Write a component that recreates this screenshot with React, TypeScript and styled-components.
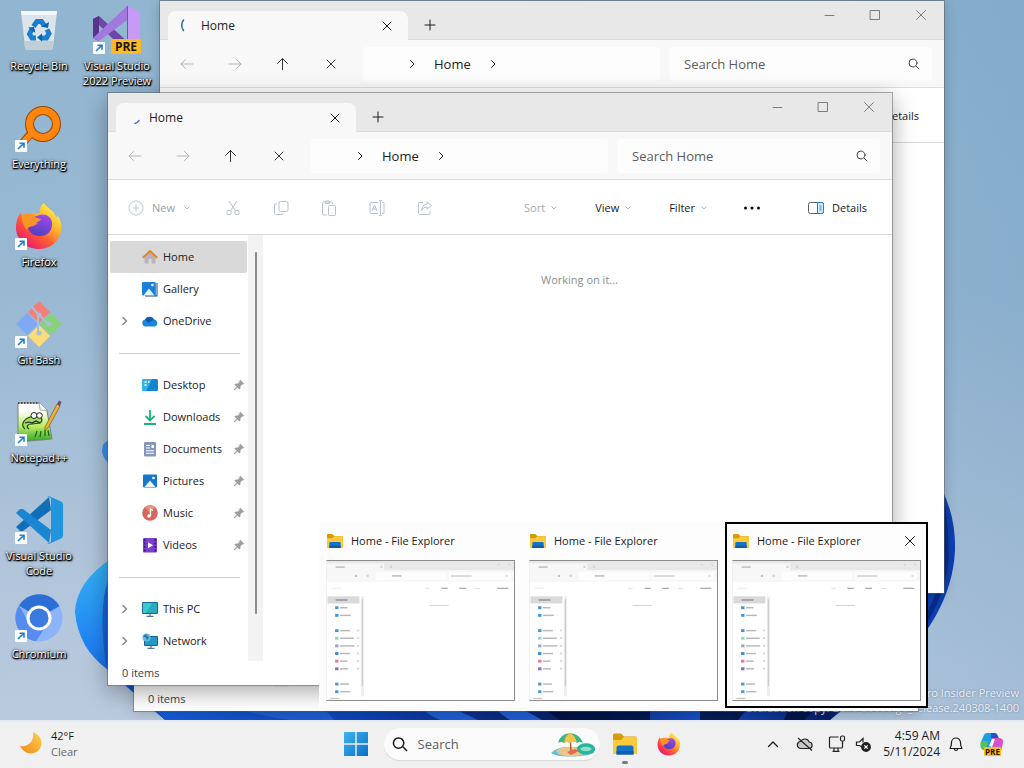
import React from "react";
import styled, { createGlobalStyle, css } from "styled-components";

const GlobalStyle = createGlobalStyle`
  *, *::before, *::after { box-sizing: border-box; }
  body {
    margin: 0;
    font-family: "Open Sans", "Noto Sans", sans-serif;
    font-size: 11px;
    line-height: 16px;
    color: #1b1b1b;
    overflow: hidden;
  }
  button {
    font: inherit;
    color: inherit;
    background: none;
    border: 0;
    padding: 0;
    margin: 0;
    display: flex;
    align-items: center;
    justify-content: center;
  }
  svg { display: block; flex: none; }
`;

/* ---------- shell ---------- */

const Screen = styled.div`
  height: 100vh;
  display: grid;
  grid-template-rows: minmax(0, 1fr) 48px;
`;

const Desktop = styled.main`
  position: relative;
  overflow: hidden;
  background: linear-gradient(180deg, #8ab1cd 0%, #92b4d0 40%, #a9c0d8 75%, #b6c7dc 100%);
`;

const WallpaperSvg = styled.svg`
  position: absolute;
  inset: 0;
  width: 100%;
  height: 100%;
`;

const IconGrid = styled.ul`
  position: relative;
  margin: 0;
  padding: 0;
  list-style: none;
  display: grid;
  grid-auto-flow: column;
  grid-template-rows: repeat(7, 98px);
  grid-auto-columns: 78px;
`;

const Shortcut = styled.button`
  width: 78px;
  padding-top: 6px;
  flex-direction: column;
  justify-content: flex-start;
  gap: 4px;
  color: #fff;
  line-height: 15px;
  text-align: center;
`;

const ShortcutLabel = styled.span`
  text-shadow: 0 1px 1px #000, 1px 1px 1px #000, 1px 1px 2px #000, 0 0 3px rgba(0, 0, 0, 0.9);
`;

const Watermark = styled.p`
  position: absolute;
  right: 5px;
  bottom: 5px;
  margin: 0;
  text-align: right;
  line-height: 15px;
  color: rgba(255, 255, 255, 0.85);
  text-shadow: 0 0 2px rgba(60, 80, 110, 0.6);
`;

/* ---------- explorer window ---------- */

const WindowFrame = styled.section<{ $x: number; $y: number; $active?: boolean }>`
  position: absolute;
  left: ${(p) => p.$x}px;
  top: ${(p) => p.$y}px;
  width: 784px;
  background: #fff;
  box-shadow: 0 0 0 1px rgba(90, 90, 90, 0.5),
    ${(p) => (p.$active ? "0 6px 22px rgba(0, 0, 0, 0.36)" : "0 2px 12px rgba(0, 0, 0, 0.2)")};
`;

const TitleBar = styled.header`
  display: flex;
  height: 39px;
  padding-left: 8px;
  background: #e8e8e8;
  border-bottom: 1px solid #dcdcdc;
`;

const Tab = styled.div`
  display: flex;
  align-items: center;
  width: 240px;
  height: 29px;
  margin-top: 10px;
  padding: 0 9px 0 13px;
  background: #f8f8f8;
  border-radius: 8px 8px 0 0;
  font-size: 12px;
`;

const TabTitle = styled.span`
  flex: 1;
  padding-left: 4px;
`;

const TabClose = styled.button`
  width: 24px;
  height: 24px;
`;

const NewTab = styled.button`
  width: 32px;
  height: 29px;
  margin: 9px 0 0 6px;
`;

const Caption = styled.div`
  display: flex;
  margin-left: auto;
  color: #7d7d7d;
`;

const CaptionButton = styled.button`
  width: 46px;
  height: 28px;
`;

const AddressRow = styled.div`
  display: flex;
  align-items: center;
  height: 48px;
  padding: 0 12px 0 3px;
  background: #f8f8f8;
  border-bottom: 1px solid #dedede;
`;

const NavButton = styled.button<{ $muted?: boolean }>`
  width: 48px;
  height: 34px;
  color: ${(p) => (p.$muted ? "#b4b4b4" : "#333")};
`;

const field = css`
  display: flex;
  align-items: center;
  height: 34px;
  background: #fdfdfd;
  border-radius: 4px;
  font-size: 13px;
`;

const Breadcrumb = styled.nav`
  ${field}
  flex: 1;
  margin: 0 9px 0 8px;
  padding-left: 39px;
  gap: 12px;
`;

const CrumbArrow = styled.button`
  width: 20px;
  height: 24px;
`;

const SearchField = styled.label`
  ${field}
  width: 263px;
  padding: 0 10px 0 15px;
  color: #444;
`;

const SearchInput = styled.input`
  flex: 1;
  min-width: 0;
  padding: 0;
  border: 0;
  outline: 0;
  background: none;
  font: inherit;
  color: inherit;
  &::placeholder {
    color: #5c5c5c;
    opacity: 1;
  }
`;

const CommandBar = styled.div`
  display: flex;
  align-items: center;
  justify-content: space-between;
  height: 55px;
  padding: 1px 21px 0 20px;
  border-bottom: 1px solid #d8d8d8;
`;

const EditTools = styled.div`
  display: flex;
`;

const ViewTools = styled.div`
  display: flex;
  gap: 29px;
`;

const NewButton = styled.button`
  width: 81px;
  height: 32px;
  justify-content: flex-start;
  gap: 8px;
  color: #9c9c9c;
`;

const ToolButton = styled.button`
  width: 48px;
  height: 32px;
`;

const MenuButton = styled.button<{ $muted?: boolean }>`
  height: 32px;
  padding: 0 4px;
  gap: 5px;
  color: ${(p) => (p.$muted ? "#aaa" : "#1b1b1b")};
`;

const MoreButton = styled.button`
  width: 22px;
  height: 32px;
`;

const DetailsButton = styled(MenuButton)`
  gap: 8px;
  margin-left: 12px;
`;

const Body = styled.div`
  display: flex;
`;

const SideNav = styled.ul`
  width: 140px;
  margin: 0;
  padding: 6px 0 4px 2px;
  list-style: none;
`;

const NavItem = styled.button<{ $selected?: boolean }>`
  width: 137px;
  height: 32px;
  padding: 0 2px 0 8px;
  justify-content: flex-start;
  background: ${(p) => (p.$selected ? "#d9d9d9" : "none")};
  border-radius: 2px;
`;

const ExpandSlot = styled.span`
  width: 24px;
  color: #8a8a8a;
`;

const NavLabel = styled.span`
  flex: 1;
  padding-left: 5px;
  text-align: left;
`;

const Divider = styled.li`
  height: 32px;
  padding: 16px 8px 0 9px;
  &::before {
    content: "";
    display: block;
    border-top: 1px solid #cfcfcf;
  }
`;

const ScrollTrack = styled.div`
  width: 15px;
  padding: 17px 6px 47px 7px;
  background: #f3f3f3;
`;

const ScrollThumb = styled.div`
  height: 100%;
  background: #8a8a8a;
  border-radius: 1px;
`;

const FileArea = styled.div`
  flex: 1;
  padding: 37px 0 0 4px;
  text-align: center;
  color: #8e8e8e;
`;

const StatusBar = styled.footer`
  height: 24px;
  padding: 4px 14px;
  color: #33414f;
`;

/* ---------- task previews ---------- */

const PreviewPanel = styled.div`
  position: absolute;
  left: calc(50% - 193px);
  bottom: 12px;
  display: flex;
  background: #fdfdfd;
`;

const PreviewCard = styled.article<{ $focused?: boolean }>`
  width: 203px;
  padding: 5px;
  border: 2px solid ${(p) => (p.$focused ? "#000" : "transparent")};
`;

const PreviewHead = styled.header`
  display: flex;
  align-items: center;
  height: 24px;
  margin-bottom: 7px;
  padding-left: 1px;
  gap: 8px;
`;

const PreviewTitle = styled.span`
  flex: 1;
`;

const PreviewClose = styled.button`
  width: 22px;
  height: 22px;
`;

const ThumbSvg = styled.svg`
  width: 100%;
  height: auto;
  border: 1px solid #8c8c8c;
  border-left-color: #f0f0f0;
`;

/* ---------- taskbar ---------- */

const Taskbar = styled.footer`
  display: grid;
  grid-template-columns: 1fr auto 1fr;
  align-items: center;
  background: #f0f0f0;
  box-shadow: inset 0 2px #e3e9f3;
`;

const Weather = styled.button`
  justify-self: start;
  padding-left: 19px;
  gap: 8px;
  text-align: left;
`;

const Muted = styled.span`
  display: block;
  color: #666;
`;

const Pinned = styled.div`
  display: flex;
  align-items: center;
`;

const TaskButton = styled.button`
  position: relative;
  width: 44px;
  height: 40px;
`;

const RunningMark = styled.span`
  position: absolute;
  left: 19px;
  bottom: 0;
  width: 6px;
  height: 3px;
  border-radius: 2px;
  background: #7a7a7a;
`;

const TaskSearch = styled.label`
  display: flex;
  align-items: center;
  width: 216px;
  height: 32px;
  margin: 0 3px 0 6px;
  padding: 0 4px 0 8px;
  gap: 10px;
  background: #fbfbfb;
  border-radius: 16px;
  box-shadow: 0 1px 1px #d8d8d8;
  font-size: 13px;
`;

const Tray = styled.div`
  display: flex;
  align-items: center;
  justify-self: end;
  padding-right: 12px;
`;

const TrayButton = styled.button<{ $w: number }>`
  width: ${(p) => p.$w}px;
  height: 40px;
`;

const Clock = styled.button`
  display: block;
  width: 68px;
  font-size: 12px;
  text-align: right;
`;

/* ---------- small glyphs ---------- */

type StrokeProps = { d: string; size?: number; width?: number; box?: number };
const Stroke = ({ d, size = 16, width = 1, box = 16 }: StrokeProps) => (
  <svg width={size} height={size} viewBox={`0 0 ${box} ${box}`} fill="none" stroke="currentColor" strokeWidth={width} strokeLinecap="round" strokeLinejoin="round" aria-hidden="true">
    <path d={d} />
  </svg>
);

const X_MARK = "M4 4l8 8M12 4l-8 8";
const CHEVRON_RIGHT = "M6.500 4.500L10 8l-3.500 3.500";
const SEARCH = "M10 10l3 3M11 7a4 4 0 1 1-8 0a4 4 0 0 1 8 0z";

const ChevronDown = () => (
  <svg width="8" height="8" viewBox="0 0 8 8" fill="none" stroke="#b9b9b9" aria-hidden="true"><path d="M1.500 2.500L4 5l2.500-2.500" /></svg>
);

const Tool = ({ children }: { children: React.ReactNode }) => (
  <svg width="16" height="16" viewBox="0 0 16 16" fill="none" stroke="#b4c3d6" strokeWidth="1" strokeLinejoin="round" aria-hidden="true">{children}</svg>
);

const Pin = () => (
  <svg width="12" height="12" viewBox="0 0 12 12" aria-hidden="true">
    <path d="M7.200 .8l4 4-1.200 .8-.8 -.1-1.900 1.900.2 2.100-1.100 1.100-2.200-2.200L1.500 11.200l-.8.1.1-.8 2.800-2.700L1.400 5.600l1.100-1.100 2.100.2 1.900-1.900-.1-.8z" fill="#9c9c9c" />
  </svg>
);

const FolderIcon = ({ size = 16 }: { size?: number }) => (
  <svg width={size} height={size} viewBox="0 0 24 24" aria-hidden="true">
    <path d="M0 3.500Q0 1.500 1.500 1.500H8l3 3h11.500Q24 4.500 24 6V21q0 1-1.500 1h-21Q0 22 0 21z" fill="#d99a08" />
    <path d="M0 8h8L11 5h13v16q0 1-1.500 1h-21Q0 22 0 21z" fill="#fccb3c" />
    <path d="M3.500 22.500V15.500q0-2 2-2h13q2 0 2 2v7z" fill="#1273c9" />
    <path d="M3.500 22.500V19h17v3.500z" fill="#0d5cad" />
  </svg>
);

const FirefoxIcon = ({ size = 48 }: { size?: number }) => (
  <svg width={size} height={size} viewBox="0 0 48 48" aria-hidden="true">
    <defs>
      <linearGradient id="fx1" x1="0.85" y1="0.1" x2="0.2" y2="0.9"><stop offset="0" stopColor="#fff14a" /><stop offset=".35" stopColor="#ffb02e" /><stop offset=".65" stopColor="#ff5a36" /><stop offset="1" stopColor="#ec1c6c" /></linearGradient>
      <linearGradient id="fx2" x1="0.7" y1="0" x2="0.3" y2="1"><stop offset="0" stopColor="#a24be8" /><stop offset="1" stopColor="#4c3fc0" /></linearGradient>
    </defs>
    <path d="M29 1c2 4 7 6 10 10 1 2 2 3 2 5 1-1 1-2 1-3 4 5 5 10 4 16-2 11-11 18-22 18C11 47 1 38 1 25c0-6 2-11 5-15 0 2 0 3 1 4 2-2 5-3 8-2 3-1 7-1 10 0-1-5 1-9 4-11z" fill="url(#fx1)" />
    <path d="M22 14c7-4 14 0 15 6 1 8-4 14-12 14-7 0-12-4-12-10 4 1 7 0 10-3-3 0-4-2-6-4 1-2 3-3 5-3z" fill="url(#fx2)" />
    <path d="M7 14c3-3 8-3 12 0 2 2 5 2 7 3-1 3-6 3-7 6-3 2-6 1-7 5-3-3-6-8-5-14z" fill="#ff9426" />
  </svg>
);

const ArrowBadge = () => (
  <g>
    <rect x="0" y="36" width="12" height="12" rx="1" fill="#fff" />
    <path d="M3 45l5.500-5.500M4.500 39.200H9v4.500" fill="none" stroke="#1b7fd4" strokeWidth="1.600" />
  </g>
);

const DesktopIcon = ({ children, badge = true }: { children: React.ReactNode; badge?: boolean }) => (
  <svg width="48" height="48" viewBox="0 0 48 48" aria-hidden="true">
    {children}
    {badge && <ArrowBadge />}
  </svg>
);

const desktopShortcuts: { label: string; icon: React.ReactNode }[] = [
  {
    label: "Recycle Bin",
    icon: (
      <DesktopIcon badge={false}>
        <path d="M6 5h36l-4 36q-.3 3-3 3H13q-2.700 0-3-3z" fill="#dde5eb" />
        <path d="M6 5h36l-.5 4h-35z" fill="#f4f7f9" />
        <path d="M9 35l1 6q.3 3 3 3h22q2.700 0 3-3l1-6z" fill="#c2ced6" />
        <g fill="none" stroke="#1a7fd0" strokeWidth="5">
          <path d="M18.500 20.500l3.500-5h4.500l3 4.500" /><path d="M32 23.500l2 4-2.500 4.500H26" /><path d="M21 32h-4l-2.500-4 2.500-5" />
        </g>
        <path d="M26 20.500l7 1.500 1-6zM27 27.500v8l-5-4zM13 21.500l6-.5 1.500 6z" fill="#0f62b8" />
      </DesktopIcon>
    ),
  },
  {
    label: "Everything",
    icon: (
      <DesktopIcon>
        <path d="M17 28L6 41" stroke="#8d4a08" strokeWidth="8" />
        <circle cx="28" cy="20" r="13.500" fill="none" stroke="#8d4a08" strokeWidth="9" />
        <path d="M17.500 28L6 41" stroke="#ff850d" strokeWidth="6" />
        <circle cx="28" cy="20" r="13.500" fill="none" stroke="#ff850d" strokeWidth="7" />
      </DesktopIcon>
    ),
  },
  { label: "Firefox", icon: <DesktopIcon><FirefoxIcon /></DesktopIcon> },
  {
    label: "Git Bash",
    icon: (
      <DesktopIcon>
        <path d="M24 1l11 11-11 11-11-11z" fill="#f37f79" />
        <path d="M12 13l11 11-11 11L1 24z" fill="#80a9f5" />
        <path d="M36 13l11 11-11 11-11-11z" fill="#87d279" />
        <path d="M24 25l11 11-11 11-11-11z" fill="#fbdc76" />
        <path d="M17 7l6 7v20M24 15l9 9" fill="none" stroke="#a8c0d6" strokeWidth="2" />
        <circle cx="24" cy="15" r="2.500" fill="#a8c0d6" /><circle cx="34" cy="24" r="2.500" fill="#a8c0d6" /><circle cx="24" cy="33" r="2.500" fill="#a8c0d6" />
      </DesktopIcon>
    ),
  },
  {
    label: "Notepad++",
    icon: (
      <DesktopIcon>
        <defs><linearGradient id="npp" x1="0" y1="0" x2="0" y2="1"><stop offset=".2" stopColor="#fff" /><stop offset=".6" stopColor="#b9ec62" /><stop offset="1" stopColor="#2fa22a" /></linearGradient></defs>
        <path d="M3 5h21l8 8 5 28-34 3z" fill="url(#npp)" stroke="#7b8476" strokeWidth="1" />
        <path d="M3 5h22" stroke="#555" strokeWidth="2" strokeDasharray="1.500 1.500" />
        <path d="M24 4l1 8 8 1z" fill="#eef3f5" stroke="#8a938a" strokeWidth=".7" />
        <path d="M10 31c-5-4-1-10 5-12l6-1c5-1 8 4 4 7l-8 1c-5 0-6 3-3 5" fill="#a2dc5c" stroke="#20481a" strokeWidth="1.200" />
        <circle cx="19" cy="17.500" r="3" fill="#fff" stroke="#222" /><circle cx="24.500" cy="17.500" r="2.800" fill="#fff" stroke="#222" />
        <path d="M10 25l4-1 3 1 4-2 4 2" fill="none" stroke="#222" strokeWidth="1.200" />
        <path d="M20 39l2-6M25 39l1-6M30 38v-6M34 38l-1-6" stroke="#12640f" strokeWidth="1.200" />
        <path d="M30 29l12-23 3 2-12 22-3 2z" fill="#e9b23c" stroke="#8b6416" strokeWidth=".8" />
        <path d="M42 6l2-3.500 2.500 1.500-1.500 4z" fill="#6b4a78" />
      </DesktopIcon>
    ),
  },
  {
    label: "Visual Studio Code",
    icon: (
      <DesktopIcon>
        <path d="M34 1L1 31l4 4h3L36 14z" fill="#0f6fb8" />
        <path d="M34 47L1 17l4-4h3l28 21z" fill="#1a86d3" />
        <path d="M34 0l12 5.500q2 1 2 3v31q0 2-2 3L34 48q-1 0-2-1 4 1 4-3V4q0-4-4-3z" fill="#2196de" />
      </DesktopIcon>
    ),
  },
  {
    label: "Chromium",
    icon: (
      <DesktopIcon>
        <circle cx="24" cy="24" r="23.500" fill="#8cb4f8" />
        <path d="M24 24L4 11.500A23.500 23.500 0 0 1 44.500 12z" fill="#2a6ed6" />
        <path d="M4 11.500A23.500 23.500 0 0 0 21 47.300L31 32 14 29z" fill="#568cf0" />
        <circle cx="24" cy="24" r="12.500" fill="#fff" />
        <circle cx="24" cy="24" r="9.500" fill="#3a7be0" />
      </DesktopIcon>
    ),
  },
  {
    label: "Visual Studio 2022 Preview",
    icon: (
      <DesktopIcon>
        <path d="M0 13l6-3 30 27-3 9z" fill="#6f45a8" />
        <path d="M0 13l6-3v25l-6-3z" fill="#55348a" />
        <path d="M34 0L0 32l6 3L37 12z" fill="#a179dc" />
        <path d="M34 0l2 0v38l-2 2z" fill="#7a4fb8" />
        <path d="M35 0l12 6v34H35z" fill="#c79af7" />
        <rect x="18" y="33" width="30" height="15" rx="1" fill="#fdb827" />
        <text x="33" y="45" fontSize="12" fontWeight="700" textAnchor="middle" fill="#1c1400" fontFamily="Open Sans, sans-serif">PRE</text>
      </DesktopIcon>
    ),
  },
];

/* ---------- navigation pane ---------- */

const Glyph = ({ children }: { children: React.ReactNode }) => (
  <svg width="16" height="16" viewBox="0 0 16 16" aria-hidden="true">{children}</svg>
);

type Place = { label: string; icon: React.ReactNode; expand?: boolean; pinned?: boolean; selected?: boolean };

const places: (Place | null)[] = [
  {
    label: "Home",
    selected: true,
    icon: <Glyph><path d="M2.500 8L8 3l5.500 5v6.500h-4V10h-3v4.500h-4z" fill="#b9b3bd" /><path d="M.8 8.800L8 2l7.200 6.800" fill="none" stroke="#e5822a" strokeWidth="2" strokeLinejoin="round" /></Glyph>,
  },
  {
    label: "Gallery",
    icon: <Glyph><path d="M3 2h12.500v13.500H3z" fill="#0a4f9c" /><path d="M14 1v13.500" stroke="#fff" strokeWidth="1" /><rect x="0" y="1" width="13.500" height="13.500" rx="1" fill="#1a80d8" /><path d="M1.500 14.500L7 7.500l5.500 7z" fill="#e6f4ff" /><circle cx="10.500" cy="4" r="1.300" fill="#fff" /></Glyph>,
  },
  {
    label: "OneDrive",
    expand: true,
    icon: <Glyph><path d="M3.500 13.500a3.500 3.500 0 0 1-.5-6.900A5 5 0 0 1 12 6.500a3.600 3.600 0 0 1 .8 7z" fill="#1a86dd" /><path d="M3 6.600A5 5 0 0 1 12 6.500L6.500 10z" fill="#0b5cab" /></Glyph>,
  },
  null,
  {
    label: "Desktop",
    pinned: true,
    icon: <Glyph><rect x="0" y="2" width="16" height="12" rx="1.500" fill="#1583d0" /><path d="M0 3.500Q0 2 1.500 2H10L4 14H1.500Q0 14 0 12.500z" fill="#35b3e8" /><path d="M2.500 5h2M2.500 8h2M6 5h1.500" stroke="#fff" strokeWidth="1.500" /></Glyph>,
  },
  {
    label: "Downloads",
    pinned: true,
    icon: <Glyph><path d="M8 1v10M3.500 7L8 11.500 12.500 7M2 15h12" fill="none" stroke="#22b07d" strokeWidth="1.800" /></Glyph>,
  },
  {
    label: "Documents",
    pinned: true,
    icon: <Glyph><rect x="2" y="1" width="12" height="14.500" rx="1" fill="#8598b8" /><path d="M4 4.500h4M4 7h4M4 9.800h8M4 12.300h8" stroke="#fff" strokeWidth="1.100" /><path d="M9.500 4h2.500v3H9.500z" fill="#fff" /></Glyph>,
  },
  {
    label: "Pictures",
    pinned: true,
    icon: <Glyph><rect x="1" y="1.500" width="14" height="13" rx="1" fill="#1576cc" /><path d="M2.500 14L8 7.500l5.500 6.500z" fill="#e6f4ff" /><circle cx="11.500" cy="5" r="1.300" fill="#fff" /></Glyph>,
  },
  {
    label: "Music",
    pinned: true,
    icon: <Glyph><circle cx="8" cy="8" r="7.800" fill="#d6665f" /><path d="M3 2A7.800 7.800 0 0 1 13 2L8 8z" fill="#eb9073" /><path d="M8.500 11V4l2.500 1.500" fill="none" stroke="#fff" strokeWidth="1.300" /><circle cx="7" cy="11" r="1.800" fill="#fff" /></Glyph>,
  },
  {
    label: "Videos",
    pinned: true,
    icon: <Glyph><rect x="1" y="1" width="14" height="14.500" rx="1" fill="#7a3fd0" /><path d="M2.800 2v13M13.200 2v13" stroke="#3d1b80" strokeWidth="1.600" strokeDasharray="2 1.500" /><path d="M6 5.200l5 3-5 3z" fill="#fff" /></Glyph>,
  },
  null,
  {
    label: "This PC",
    expand: true,
    icon: <Glyph><rect x="0" y="1" width="16" height="12" rx="1" fill="#0e6b9a" /><rect x="1" y="2" width="14" height="10" fill="#27aebf" /><path d="M1 2h9L4 12H1z" fill="#3cc8cf" /><path d="M8 13v2M4.500 15.300h7" stroke="#5c7282" strokeWidth="1.200" /></Glyph>,
  },
  {
    label: "Network",
    expand: true,
    icon: <Glyph><rect x="2" y="3" width="14" height="10" rx="1" fill="#0f6599" /><rect x="3" y="4" width="12" height="8" fill="#2499c8" /><circle cx="4.500" cy="4.500" r="4" fill="#6cb8e4" /><path d="M1 3.500l3 1 1 3 2-3-3-3.500" fill="#2d76ab" /><path d="M9 13v2M5.500 15.400h7" stroke="#5c7282" strokeWidth="1.200" /></Glyph>,
  },
];

/* ---------- explorer ---------- */

type ExplorerProps = { x: number; y: number; active?: boolean; spinner: "arc" | "tick" };

const Explorer = ({ x, y, active, spinner }: ExplorerProps) => (
  <WindowFrame $x={x} $y={y} $active={active} aria-label="Home - File Explorer">
    <TitleBar>
      <Tab>
        <svg width="16" height="16" viewBox="0 0 16 16" fill="none" strokeLinecap="round" aria-hidden="true">
          {spinner === "arc" ? <path d="M0 2Q-3 7 0 12.500" transform="translate(-1)" stroke="#2d6f9e" strokeWidth="1.500" overflow="visible" /> : <path d="M6 13.500q2.500-.8 4-3" stroke="#5b7cc0" strokeWidth="1.600" />}
          {spinner === "arc" && <path d="M2.500 2Q-1 7 2.500 12.500" stroke="#2d6f9e" strokeWidth="1.500" />}
        </svg>
        <TabTitle>Home</TabTitle>
        <TabClose aria-label="Close tab"><Stroke d={X_MARK} /></TabClose>
      </Tab>
      <NewTab aria-label="New tab"><Stroke d="M8 3v10M3 8h10" /></NewTab>
      <Caption>
        <CaptionButton aria-label="Minimize"><Stroke d="M4 8.500h9" /></CaptionButton>
        <CaptionButton aria-label="Maximize"><Stroke d="M3.500 3.500h9v9h-9z" /></CaptionButton>
        <CaptionButton aria-label="Close"><Stroke d="M3.500 3.500l9 9M12.500 3.500l-9 9" /></CaptionButton>
      </Caption>
    </TitleBar>
    <AddressRow>
      <NavButton $muted aria-label="Back"><Stroke d="M14 8H2M6.500 3.500L2 8l4.500 4.500" /></NavButton>
      <NavButton $muted aria-label="Forward"><Stroke d="M2 8h12M9.500 3.500L14 8l-4.500 4.500" /></NavButton>
      <NavButton aria-label="Up"><Stroke d="M7.500 13.500V2.500M2.500 7.500l5-5 5 5" /></NavButton>
      <NavButton aria-label="Stop"><Stroke d={X_MARK} /></NavButton>
      <Breadcrumb aria-label="Address">
        <CrumbArrow aria-label="Locations"><Stroke d={CHEVRON_RIGHT} /></CrumbArrow>
        <span>Home</span>
        <CrumbArrow aria-label="Subfolders"><Stroke d={CHEVRON_RIGHT} /></CrumbArrow>
      </Breadcrumb>
      <SearchField>
        <SearchInput type="text" placeholder="Search Home" aria-label="Search Home" />
        <Stroke d={SEARCH} />
      </SearchField>
    </AddressRow>
    <CommandBar>
      <EditTools>
        <NewButton>
          <Tool><circle cx="8" cy="8" r="7" /><path d="M8 4.500v7M4.500 8h7" /></Tool>
          <span>New</span>
          <ChevronDown />
        </NewButton>
        <ToolButton aria-label="Cut"><Tool><path d="M4 1l6.500 10M12 1L5.500 11" /><circle cx="4" cy="12.500" r="2.300" /><circle cx="12" cy="12.500" r="2.300" /></Tool></ToolButton>
        <ToolButton aria-label="Copy"><Tool><rect x="6" y="1.500" width="9" height="10" rx="1.500" /><path d="M4 4H2.500Q1.500 4 1.500 5v8.500q0 1 1 1H9q1 0 1-1" /></Tool></ToolButton>
        <ToolButton aria-label="Paste"><Tool><path d="M6 15H2.500q-1 0-1-1V3q0-1 1-1h8q1 0 1 1v1M4.500 1h4v2.500h-4z" /><rect x="7.500" y="5.500" width="7" height="10" rx="1" /></Tool></ToolButton>
        <ToolButton aria-label="Rename"><Tool><path d="M9 2.500H2q-1 0-1 1v9q0 1 1 1h7M13 2.500h1q1 0 1 1v9q0 1-1 1h-1M11.500 1v14M10 .5h3M10 15.500h3M3 11l2.500-6L8 11M4 9h3" /></Tool></ToolButton>
        <ToolButton aria-label="Share"><Tool><path d="M6 2.500H2.500q-1 0-1 1v10q0 1 1 1H12q1 0 1-1V11M10 2l4.500 3.500L10 9V7Q6 7 4.500 10.500 5 4.500 10 4z" /></Tool></ToolButton>
      </EditTools>
      <ViewTools>
        <MenuButton $muted><span>Sort</span><ChevronDown /></MenuButton>
        <MenuButton><span>View</span><ChevronDown /></MenuButton>
        <MenuButton><span>Filter</span><ChevronDown /></MenuButton>
        <MoreButton aria-label="More">
          <svg width="18" height="4" viewBox="0 0 18 4" aria-hidden="true"><circle cx="2.500" cy="2" r="1.500" /><circle cx="9" cy="2" r="1.500" /><circle cx="15.500" cy="2" r="1.500" /></svg>
        </MoreButton>
        <DetailsButton>
          <svg width="16" height="14" viewBox="0 0 16 14" fill="none" aria-hidden="true">
            <rect x=".5" y="1.500" width="15" height="11" rx="2" stroke="#555f6b" />
            <path d="M9.500 1.500h4q2 0 2 2v7q0 2-2 2h-4z" fill="#d5eefb" stroke="#1681c4" />
            <path d="M11.500 5h2M11.500 7h2M11.500 9h2" stroke="#1681c4" />
          </svg>
          <span>Details</span>
        </DetailsButton>
      </ViewTools>
    </CommandBar>
    <Body>
      <SideNav>
        {places.map((place, i) =>
          place ? (
            <li key={place.label}>
              <NavItem $selected={place.selected}>
                <ExpandSlot>{place.expand && <Stroke d="M5 4.500L8.500 8 5 11.500" width={1.5} />}</ExpandSlot>
                {place.icon}
                <NavLabel>{place.label}</NavLabel>
                {place.pinned && <Pin />}
              </NavItem>
            </li>
          ) : (
            <Divider key={i} role="separator" />
          )
        )}
      </SideNav>
      <ScrollTrack><ScrollThumb /></ScrollTrack>
      <FileArea>Working on it...</FileArea>
    </Body>
    <StatusBar>0 items</StatusBar>
  </WindowFrame>
);

/* ---------- previews ---------- */

const thumbRows = [
  { y: 190, w: 32, c: "#2c7fc4" }, { y: 222, w: 46, c: "#1a86dd" }, { y: 286, w: 42, c: "#1583d0" },
  { y: 318, w: 58, c: "#7fd0b4" }, { y: 350, w: 60, c: "#8598b8" }, { y: 382, w: 42, c: "#1576cc" },
  { y: 414, w: 32, c: "#e0608a" }, { y: 446, w: 34, c: "#6a4fd0" }, { y: 510, w: 38, c: "#1f8fb8" }, { y: 542, w: 44, c: "#2a86cf" },
];

const Thumbnail = () => (
  <ThumbSvg viewBox="0 0 784 584" aria-hidden="true">
    <rect width="784" height="584" fill="#fff" />
    <rect width="784" height="40" fill="#e8e8e8" />
    <path d="M0 10h240v78H0zM0 40h784v46H0z" fill="#f7f7f7" />
    <path d="M205 46h295v34H205zM510 46h262v34H510z" fill="#fdfdfd" />
    <g fill="#c4c4c4">
      <rect x="36" y="22" width="38" height="7" /><rect x="224" y="20" width="9" height="9" opacity=".7" /><rect x="264" y="20" width="9" height="9" opacity=".5" />
      <rect x="117" y="58" width="9" height="9" /><rect x="166" y="58" width="9" height="9" opacity=".7" /><rect x="272" y="59" width="40" height="7" />
      <rect x="520" y="60" width="86" height="6" opacity=".8" /><rect x="748" y="58" width="9" height="9" opacity=".5" />
      <rect x="20" y="112" width="40" height="5" opacity=".3" /><rect x="412" y="112" width="18" height="5" opacity=".5" />
      <rect x="716" y="12" width="8" height="8" opacity=".4" /><rect x="760" y="12" width="8" height="8" opacity=".4" />
      <rect x="430" y="184" width="80" height="5" opacity=".7" />
      <rect x="14" y="574" width="38" height="5" />
    </g>
    <g fill="#a4a4a4"><rect x="480" y="112" width="26" height="5" /><rect x="555" y="112" width="28" height="5" /><rect x="622" y="113" width="20" height="3" opacity=".5" /><rect x="714" y="112" width="46" height="5" /></g>
    <rect x="2" y="148" width="134" height="30" fill="#dadada" />
    <rect x="36" y="160" width="50" height="7" fill="#a09aa0" />
    <path d="M142 148h13v420h-13z" fill="#eee" /><path d="M146 160h4v365h-4z" fill="#c4c4c4" />
    {thumbRows.map((row) => (
      <g key={row.y}>
        <rect x="34" y={row.y} width="14" height="12" fill={row.c} opacity=".85" />
        <rect x="54" y={row.y + 3} width={row.w} height="6" fill="#b8b8b8" />
        {row.y > 280 && row.y < 450 && <rect x="126" y={row.y + 2} width="9" height="7" fill="#d4d4d4" />}
      </g>
    ))}
  </ThumbSvg>
);

const previews = [{ id: 1, focused: false }, { id: 2, focused: false }, { id: 3, focused: true }];

const Wallpaper = () => (
  <WallpaperSvg viewBox="0 0 1024 720" preserveAspectRatio="xMidYMax slice" aria-hidden="true">
    <defs>
      <linearGradient id="wpBack" x1="0" y1="0" x2="1" y2="0"><stop offset="0" stopColor="#fff" stopOpacity=".06" /><stop offset="1" stopColor="#5f93bd" stopOpacity=".18" /></linearGradient>
      <linearGradient id="petal" x1="0" y1="0" x2="0.4" y2="1"><stop offset="0" stopColor="#35b5f6" /><stop offset=".5" stopColor="#1f80f2" /><stop offset="1" stopColor="#0a45bd" /></linearGradient>
      <linearGradient id="deep" x1="0" y1="0" x2="1" y2="0"><stop offset="0" stopColor="#1660dd" /><stop offset=".35" stopColor="#0d3fae" /><stop offset=".6" stopColor="#0a2166" /><stop offset=".8" stopColor="#1750c4" /><stop offset="1" stopColor="#071b5c" /></linearGradient>
    </defs>
    <rect width="1024" height="720" fill="url(#wpBack)" />
    <path d="M112 438Q101 442 102 452Q104 461 112 466z" fill="#3a92ee" />
    <path d="M930 470Q956 505 955 550Q952 620 880 680L830 720H600V470z" fill="#0c3fae" />
    <path d="M938 480Q947 520 946 560Q940 630 850 705" fill="none" stroke="#072a86" strokeWidth="5" />
    <path d="M112 558Q76 582 75 612Q78 648 108 670Q130 690 165 720H400V558z" fill="url(#petal)" />
    <path d="M108 580Q98 610 106 665L165 720H200V560z" fill="#0f55d6" opacity=".75" />
    <path d="M140 690h700q10 12-10 30H165z" fill="url(#deep)" />
    <path d="M290 720q-40-6-60-14h90q10 8 14 14zM440 720q-14-6-18-12h30q14 6 26 12zM510 720q-10-6-14-12h24q12 6 22 12z" fill="#1f5ecf" />
    <path d="M540 706h110v14H560zM700 706h50l-12 14h-38zM790 706h30l-16 14h-20z" fill="#03103c" opacity=".8" />
  </WallpaperSvg>
);

const CopilotIcon = () => (
  <svg width="24" height="24" viewBox="0 0 24 24" aria-hidden="true">
    <path d="M7 1h8l2 3-5 12H3q-3-2-2-6L4 3q1-2 3-2z" fill="#1b9fe0" />
    <path d="M1 9h7l-2 9H3q-4-2-2-9z" fill="#57c25a" />
    <path d="M11 1h4q2 0 3 3l1 3h-8z" fill="#2452c8" />
    <path d="M11 6h9q4 1 3 5l-2 8h-9z" fill="#d455c8" />
    <path d="M9 14l3-7h3l-3 8z" fill="#fff" />
    <rect x="4" y="15" width="17" height="9" rx="1" fill="#fcbf14" />
    <text x="12.500" y="22.500" fontSize="8" fontWeight="700" textAnchor="middle" fill="#1c1400" fontFamily="Open Sans, sans-serif">PRE</text>
  </svg>
);

export default function App() {
  return (
    <Screen>
      <GlobalStyle />
      <Desktop>
        <Wallpaper />
        <IconGrid>
          {desktopShortcuts.map((item) => (
            <li key={item.label}><Shortcut>{item.icon}<ShortcutLabel>{item.label}</ShortcutLabel></Shortcut></li>
          ))}
        </IconGrid>
        <Watermark>Windows 11 Pro Insider Preview<br />Evaluation copy. Build 26080.ge_release.240308-1400</Watermark>
        <Explorer x={134} y={119} spinner="tick" />
        <Explorer x={160} y={1} spinner="arc" />
        <Explorer x={108} y={93} spinner="tick" active />
        <PreviewPanel>
          {previews.map((p) => (
            <PreviewCard key={p.id} $focused={p.focused}>
              <PreviewHead>
                <FolderIcon />
                <PreviewTitle>Home - File Explorer</PreviewTitle>
                {p.focused && <PreviewClose aria-label="Close window"><Stroke d="M3.500 3.500l9 9M12.500 3.500l-9 9" /></PreviewClose>}
              </PreviewHead>
              <Thumbnail />
            </PreviewCard>
          ))}
        </PreviewPanel>
      </Desktop>
      <Taskbar>
        <Weather>
          <svg width="24" height="24" viewBox="0 0 24 24" aria-hidden="true">
            <defs><linearGradient id="moon" x1="1" y1="0" x2="0" y2="1"><stop offset="0" stopColor="#fbd24a" /><stop offset="1" stopColor="#ee8a1d" /></linearGradient></defs>
            <path d="M14 0q9 4 8.500 12Q21 21 12 21.500 5 21.500 1 14q7 1 11-4 3-5 2-10z" fill="url(#moon)" />
          </svg>
          <span>42°F<Muted>Clear</Muted></span>
        </Weather>
        <Pinned>
          <TaskButton aria-label="Start">
            <svg width="24" height="24" viewBox="0 0 24 24" aria-hidden="true">
              <defs><linearGradient id="win" x1="0" y1="0" x2="1" y2="1"><stop offset="0" stopColor="#3fb4f0" /><stop offset="1" stopColor="#0a6fc8" /></linearGradient></defs>
              <path d="M0 0h11.300v11.300H0zM12.700 0H24v11.300H12.700zM0 12.700h11.300V24H0zM12.700 12.700H24V24H12.700z" fill="url(#win)" />
            </svg>
          </TaskButton>
          <TaskSearch>
            <Stroke d="M11.500 11.500l4 4M12.500 7.500a5.500 5.500 0 1 1-11 0a5.500 5.500 0 0 1 11 0z" box={17} width={1.6} />
            <SearchInput type="text" placeholder="Search" aria-label="Search" />
            <svg width="46" height="26" viewBox="0 0 46 26" aria-hidden="true">
              <path d="M1 22q5-5 14-6h20q10 2 9 6-8 3-20 3.500Q6 26 1 22z" fill="#62bfe0" />
              <path d="M6 20q7-5 18-4 9 1 12 6-9 4-20 3-8-1-10-5z" fill="#ecc58a" />
              <path d="M20 3l1 18" stroke="#a9662b" strokeWidth="1.500" />
              <path d="M8 12Q10 3 20 2q10 1 13 10-3-2-6 0-3-3-7 0-3-2-6 0-3-2-6 0z" fill="#3eb489" />
              <path d="M14 12q1-8 6-10 5 2 7 10-3-3-7 0-3-2-6 0z" fill="#f6c445" />
              <ellipse cx="36" cy="18" rx="7.500" ry="4" fill="#8fe0cc" stroke="#25b79b" strokeWidth="3.500" />
              <path d="M17 21l8-3 4 2-8 4z" fill="#e8694a" />
            </svg>
          </TaskSearch>
          <TaskButton aria-label="File Explorer"><FolderIcon size={24} /><RunningMark /></TaskButton>
          <TaskButton aria-label="Firefox"><FirefoxIcon size={24} /></TaskButton>
        </Pinned>
        <Tray>
          <TrayButton $w={32} aria-label="Show hidden icons"><Stroke d="M3.500 10.500L8 6l4.500 4.500" width={1.3} /></TrayButton>
          <TrayButton $w={32} aria-label="OneDrive">
            <svg width="18" height="16" viewBox="0 0 18 16" fill="none" stroke="#222" strokeWidth="1.200" aria-hidden="true">
              <path d="M5 12.500a3.500 3.500 0 0 1-.3-7Q6 3 9 3t4.200 3a3.300 3.300 0 0 1 .3 6.500z" fill="#c9c9c9" /><path d="M2 2l14 12.500" />
            </svg>
          </TrayButton>
          <TrayButton $w={32} aria-label="Network">
            <svg width="18" height="18" viewBox="0 0 18 18" fill="none" stroke="#222" strokeWidth="1.200" aria-hidden="true">
              <path d="M10.500 2H2.500q-1 0-1 1v9q0 1 1 1h11q1 0 1-1V8M6 13v3M10 13v3M4.500 16.400h7" /><rect x="12.500" y="1" width="4" height="5" rx="1.500" /><path d="M14.500 6v3" />
            </svg>
          </TrayButton>
          <TrayButton $w={19} aria-label="Volume">
            <svg width="16" height="16" viewBox="0 0 16 16" fill="none" stroke="#222" strokeWidth="1.200" aria-hidden="true">
              <path d="M7 11L4.500 9.500H1.500V6h3L8 2.500v4" /><circle cx="11" cy="11" r="4.300" fill="#222" /><path d="M9.300 9.300l3.400 3.400M12.700 9.300l-3.400 3.400" stroke="#fff" />
            </svg>
          </TrayButton>
          <Clock>4:59 AM<br />5/11/2024</Clock>
          <TrayButton $w={32} aria-label="Notifications">
            <Stroke d="M2 12.500h12q-1.500-2-1.500-6a4.500 4.500 0 0 0-9 0q0 4-1.500 6zM6.500 13a1.500 1.500 0 0 0 3 0" width={1.2} />
          </TrayButton>
          <TrayButton $w={40} aria-label="Copilot"><CopilotIcon /></TrayButton>
        </Tray>
      </Taskbar>
    </Screen>
  );
}
